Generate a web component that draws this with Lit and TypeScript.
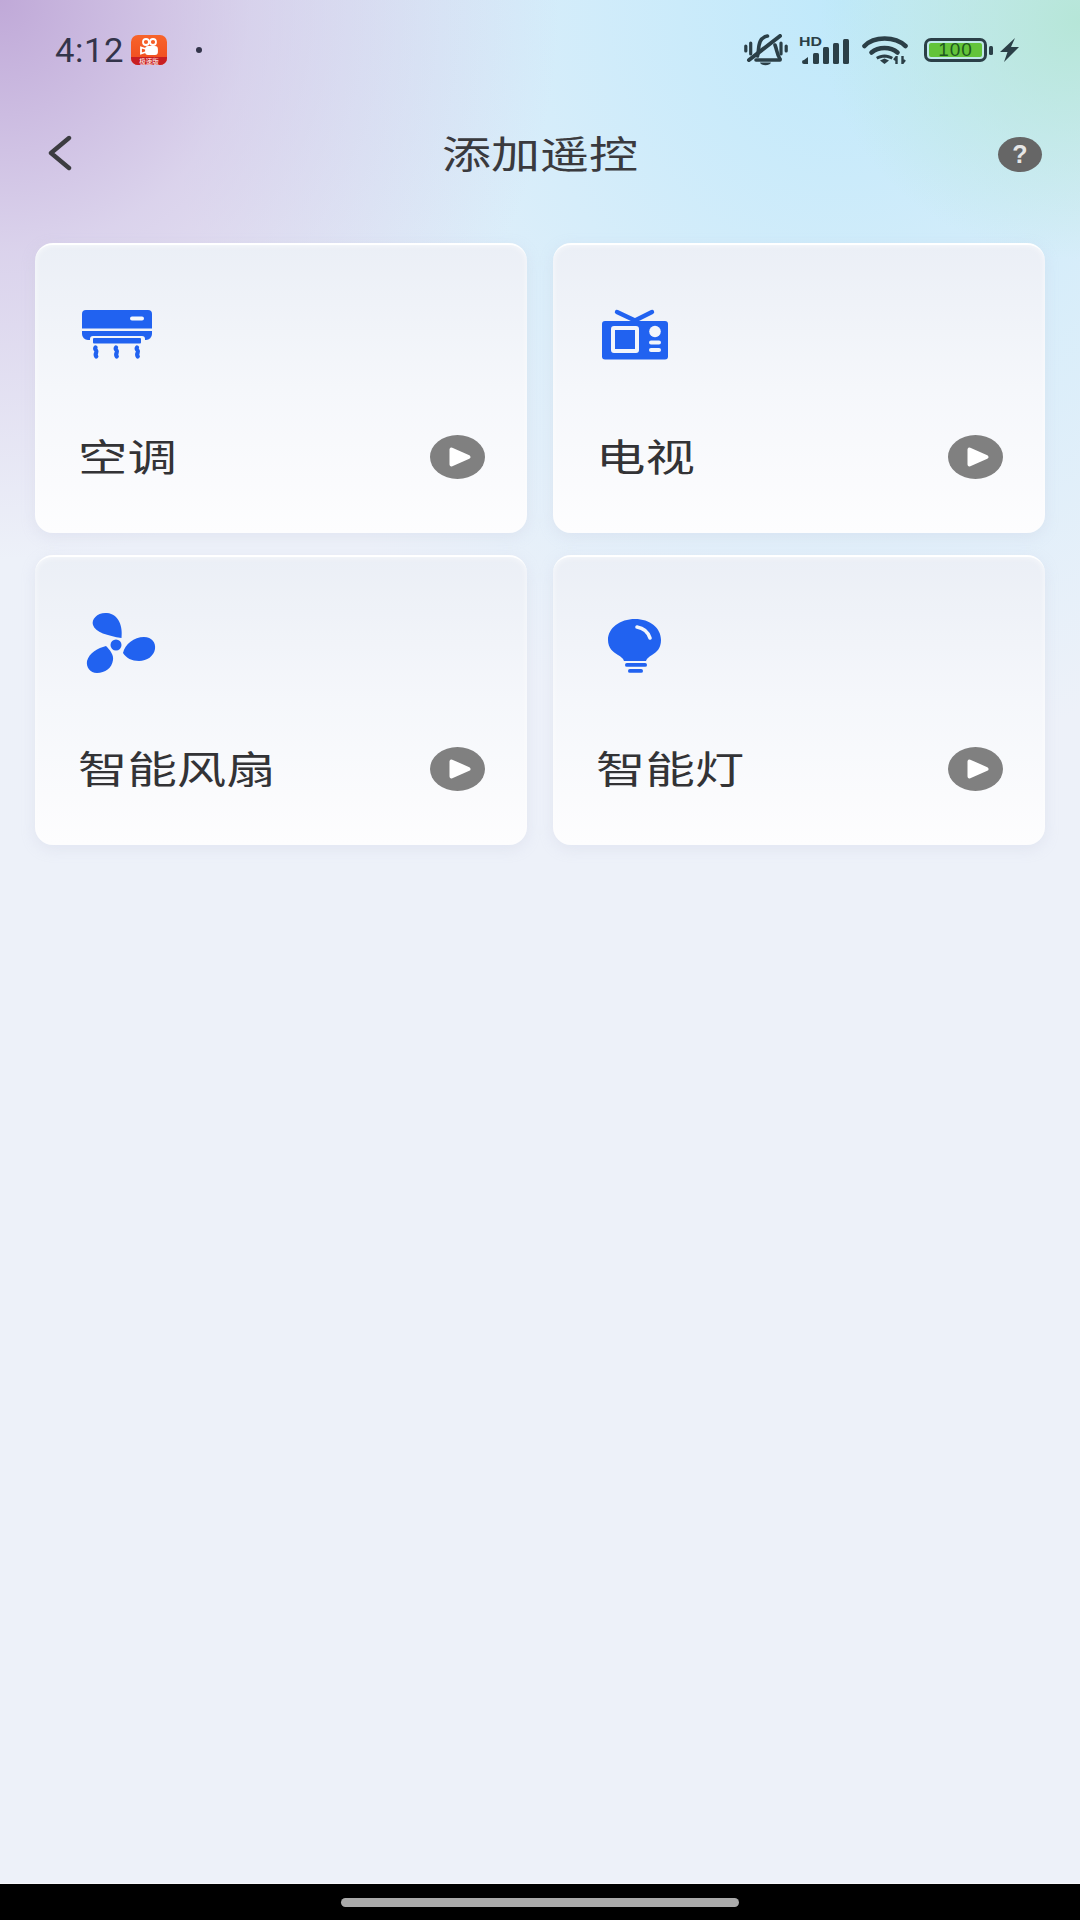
import { LitElement, html, css, svg } from 'lit';
import { customElement } from 'lit/decorators.js';

const BLUE = '#2162f0';

const icons = {
  ac: svg`
    <path fill="${BLUE}" d="M6 9h62a4 4 0 0 1 4 4v14.500H2V13a4 4 0 0 1 4-4z"/>
    <rect x="50" y="15.500" width="14" height="4" rx="2" fill="#f6f8fc"/>
    <path fill="${BLUE}" d="M2 30h70v3a6 6 0 0 1-6 6h-1v-1a3 3 0 0 0-3-3H13a3 3 0 0 0-3 3v1H8a6 6 0 0 1-6-6z"/>
    <rect x="13" y="37" width="48" height="5.500" rx="1" fill="${BLUE}"/>
    <g fill="none" stroke="${BLUE}" stroke-width="4.200" stroke-linecap="round">
      <path d="M15.500 46.500c-1.500 2 2 3 .8 5s-1 2.500 0 4"/>
      <path d="M36 46.500c-1.500 2 2 3 .8 5s-1 2.500 0 4"/>
      <path d="M57 46.500c-1.500 2 2 3 .8 5s-1 2.500 0 4"/>
    </g>`,
  tv: svg`
    <path d="M19 11l18 8.500 17-8.500" fill="none" stroke="${BLUE}" stroke-width="4.400" stroke-linecap="round" stroke-linejoin="round"/>
    <rect x="4" y="20" width="66" height="38.500" rx="3" fill="${BLUE}"/>
    <rect x="15" y="27" width="24" height="23" rx="1" fill="${BLUE}" stroke="#f2f5fb" stroke-width="4"/>
    <circle cx="57" cy="30.500" r="5.800" fill="#f2f5fb"/>
    <rect x="51" y="39.500" width="12" height="4" rx="2" fill="#f2f5fb"/>
    <rect x="51" y="47" width="12" height="4" rx="2" fill="#f2f5fb"/>`,
  fan: svg`
    <g fill="${BLUE}">
      <path d="M41.500 25C43 14 39 1 27 0 18-1 11 6 13 12 15 19 28 23 41.500 25z"/>
      <path d="M43 40C45 31 54 24 64 24 72 24 76 30 75 36 74 43 67 48 59 48 52 48 46 45 43 40z"/>
      <path d="M26 33C30 37 34 42 33 47 32 55 25 60 17 60 10 60 6 54 7 48 9 40 18 35 26 33z"/>
      <circle cx="36" cy="32" r="5.500"/>
    </g>`,
  bulb: svg`
    <path fill="${BLUE}" d="M37 6C22 6 10 15 10 27c0 8 5 12 10 15 3 2 5 3 6 6h22c1-3 3-4 6-6 5-3 9-7 9-15C63 15 52 6 37 6z"/>
    <path d="M39 14c6 1 11 5 13 11" fill="none" stroke="#f2f5fb" stroke-width="3.600" stroke-linecap="round"/>
    <rect x="27" y="50" width="22" height="3.800" rx="1.900" fill="${BLUE}"/>
    <rect x="30" y="56" width="15" height="3.800" rx="1.900" fill="${BLUE}"/>`,
};

const cards = [
  { name: '空调', icon: icons.ac },
  { name: '电视', icon: icons.tv },
  { name: '智能风扇', icon: icons.fan },
  { name: '智能灯', icon: icons.bulb },
];

@customElement('app-root')
export class AppRoot extends LitElement {
  static styles = css`
    :host {
      display: flex;
      flex-direction: column;
      width: 1080px;
      height: 1920px;
      overflow: hidden;
      font-family: 'Noto Sans CJK SC', 'Liberation Sans', sans-serif;
      background:
        radial-gradient(ellipse 560px 560px at 0 0, #c0a9d8 0%, rgba(196, 174, 220, 0.45) 45%, rgba(196, 174, 220, 0) 100%),
        radial-gradient(ellipse 260px 240px at 1080px 20px, #b6e6d8 0%, rgba(182, 230, 216, 0) 100%),
        radial-gradient(ellipse 680px 760px at 840px 0, #c0e9fb 0%, rgba(191, 233, 251, 0.42) 55%, rgba(191, 233, 251, 0) 100%),
        #edf1f9;
    }
    .status {
      display: flex;
      align-items: center;
      height: 100px;
      flex: none;
      padding-left: 55px;
      color: #33344a;
    }
    .time {
      font-family: Roboto, 'Liberation Sans', sans-serif;
      font-size: 33px;
      width: 76px;
      letter-spacing: 0.5px;
      transform: scaleX(1.05);
      transform-origin: left;
    }
    .app-icon {
      margin-right: 29px;
    }
    .dot {
      width: 6px;
      height: 6px;
      border-radius: 50%;
      background: #33344a;
    }
    .sys {
      display: flex;
      align-items: center;
      margin-left: auto;
      margin-right: 61px;
    }
    .battery {
      display: flex;
      align-items: center;
      justify-content: center;
      box-sizing: border-box;
      width: 63px;
      height: 24px;
      margin-left: 16px;
      border: 3px solid #2b3f47;
      border-radius: 7px;
      padding: 2px;
    }
    .battery span {
      flex: 1;
      height: 100%;
      border-radius: 2px;
      background: #63c43a;
      color: #1d5a1e;
      font-family: 'Liberation Sans', sans-serif;
      font-size: 19px;
      line-height: 14px;
      text-align: center;
      letter-spacing: 1px;
    }
    .tip {
      width: 4px;
      height: 9px;
      margin-left: 2px;
      border-radius: 1.5px;
      background: #2b3f47;
    }
    .nav {
      display: grid;
      grid-template-columns: 1fr auto 1fr;
      align-items: center;
      height: 106px;
      flex: none;
      padding: 0 38px 0 47px;
    }
    .title {
      display: inline-block;
      width: 196px;
      margin-left: -9px;
      margin-top: -2px;
      color: #3a3a3e;
      font-size: 38px;
      line-height: 48px;
      white-space: nowrap;
      transform: scaleX(1.29);
      transform-origin: left;
    }
    .help {
      justify-self: end;
      display: flex;
      align-items: center;
      justify-content: center;
      width: 44px;
      height: 35px;
      margin-top: 2px;
      border-radius: 50%;
      background: #666;
      color: #e6e6e6;
      font-family: 'Liberation Sans', sans-serif;
      font-weight: 700;
      font-size: 25px;
    }
    .grid {
      display: grid;
      grid-template-columns: 492px 492px;
      gap: 22px 26px;
      flex: none;
      margin-top: 37px;
      padding: 0 35px;
    }
    .card {
      display: flex;
      flex-direction: column;
      box-sizing: border-box;
      height: 290px;
      padding: 58px 42px 54px 43px;
      border-radius: 18px;
      border-top: 2px solid rgba(255, 255, 255, 0.9);
      background: linear-gradient(180deg, #ebeff6 0%, #f5f7fb 50%, #fdfdfe 100%);
      box-shadow:
        0 4px 14px rgba(190, 195, 220, 0.25),
        inset 0 0 6px rgba(255, 255, 255, 0.7);
    }
    .card svg.icon {
      display: block;
      margin-left: 2px;
      margin-top: -2px;
      overflow: visible;
    }
    .row {
      display: flex;
      align-items: center;
      justify-content: space-between;
      margin-top: auto;
      height: 44px;
    }
    .label {
      display: inline-block;
      margin-top: -4px;
      color: #333336;
      font-size: 38px;
      line-height: 44px;
      white-space: nowrap;
      transform: scaleX(1.3);
      transform-origin: left;
    }
    .spacer {
      flex: 1;
    }
    .home {
      display: flex;
      align-items: center;
      justify-content: center;
      flex: none;
      height: 36px;
      background: #000;
      border-top: 1px solid #f6f7fa;
      margin-top: -1px;
    }
    .home i {
      display: block;
      width: 398px;
      height: 9px;
      border-radius: 5px;
      background: #aaa;
    }
  `;

  private renderAppIcon() {
    return html`<svg class="app-icon" width="36" height="30" viewBox="0 0 36 30">
      <defs>
        <linearGradient id="ks" x1="0" y1="0" x2="0" y2="1">
          <stop offset="0" stop-color="#f8642a" />
          <stop offset="1" stop-color="#ef4a1e" />
        </linearGradient>
      </defs>
      <rect width="36" height="30" rx="7" fill="url(#ks)" />
      <path d="M0 22h36v1a7 7 0 0 1-7 7H7a7 7 0 0 1-7-7z" fill="#c81e22" />
      <g fill="none" stroke="#fff" stroke-width="1.800">
        <circle cx="15" cy="7" r="3" />
        <circle cx="22" cy="7" r="3" />
        <rect x="15" y="12" width="11" height="7" rx="2" fill="#fff" />
        <path d="M15 14l-5-1.500v6l5-1.500" />
      </g>
      <text x="18" y="28.500" text-anchor="middle" font-size="6.500" fill="#fff" font-family="Noto Sans CJK SC">极速版</text>
    </svg>`;
  }

  private renderSysIcons() {
    const ink = '#2b3f47';
    return html`<div class="sys">
      <svg width="44" height="32" viewBox="0 0 44 32" fill="none" stroke="${ink}" stroke-linecap="round">
        <path stroke-width="3.200" d="M1.800 12v5M6.700 9v11M37 9v11M42.200 12v5" />
        <path stroke-width="3.600" d="M13.500 22c2-5-1-18 10-20M31 11c2 5 2 10 5 14" />
        <path stroke-width="3.600" d="M12 26h24" />
        <path stroke-width="4" d="M5 26L36 2" />
        <path fill="${ink}" stroke="none" d="M16 28.500h11c-1 3.500-10 3.500-11 0z" />
      </svg>
      <svg width="50" height="28" viewBox="0 0 50 28" style="margin-left:11px" fill="${ink}">
        <text x="0" y="9.500" font-family="Liberation Sans" font-weight="700" font-size="12" textLength="23" lengthAdjust="spacingAndGlyphs">HD</text>
        <path d="M3 26a2 2 0 0 1 2-2l4-3v7H5a2 2 0 0 1-2-2z" />
        <rect x="14" y="17" width="6" height="11" rx="1.500" />
        <rect x="24" y="11" width="6" height="17" rx="1.500" />
        <rect x="34" y="7" width="6" height="21" rx="1.500" />
        <rect x="44" y="3" width="6" height="25" rx="1.500" />
      </svg>
      <svg width="46" height="28" viewBox="0 0 46 28" style="margin-left:13px">
        <g fill="none" stroke="${ink}" stroke-width="4.600" stroke-linecap="round">
          <path d="M2.500 10C12 0 33 0 43.500 10" />
          <path d="M9.500 16.500c7-6 19-6 26 0" />
        </g>
        <path d="M14 21c5-3.500 12-3.500 17 0l-1.500 2.500c-4-2.500-10-2.500-14 0z" fill="${ink}" />
        <path d="M18 24.500l4.500-2 4.500 2-4.500 3.500z" fill="${ink}" />
        <path d="M34.500 20v8M40.500 20v8M32 24l2.500-3M43 24l-2.500 3" stroke="${ink}" stroke-width="2.400" fill="none" />
      </svg>
      <div class="battery"><span>100</span></div>
      <div class="tip"></div>
      <svg width="19" height="24" viewBox="0 0 19 24" style="margin-left:7px">
        <path d="M15 0L0 14h7.500L4 24l15-15h-8z" fill="${ink}" />
      </svg>
    </div>`;
  }

  private renderPlay() {
    return html`<svg width="55" height="44" viewBox="0 0 55 44">
      <ellipse cx="27.500" cy="22" rx="27.500" ry="22" fill="#808080" />
      <path d="M21.500 14.500v15l17-7.500z" fill="#fff" stroke="#fff" stroke-width="4" stroke-linejoin="round" />
    </svg>`;
  }

  protected render() {
    return html`
      <div class="status">
        <span class="time">4:12</span>
        ${this.renderAppIcon()}
        <span class="dot"></span>
        ${this.renderSysIcons()}
      </div>
      <div class="nav">
        <svg width="26" height="36" viewBox="0 0 26 36" fill="none" stroke="#3c3c40" stroke-width="4.400" stroke-linecap="round" stroke-linejoin="round">
          <path d="M22 3L4 18l18 15" />
        </svg>
        <span class="title">添加遥控</span>
        <div class="help">?</div>
      </div>
      <div class="grid">
        ${cards.map(
          (c) => html`<div class="card">
            <svg class="icon" width="80" height="64" viewBox="0 0 80 64">${c.icon}</svg>
            <div class="row">
              <span class="label">${c.name}</span>
              ${this.renderPlay()}
            </div>
          </div>`,
        )}
      </div>
      <div class="spacer"></div>
      <div class="home"><i></i></div>
    `;
  }
}
